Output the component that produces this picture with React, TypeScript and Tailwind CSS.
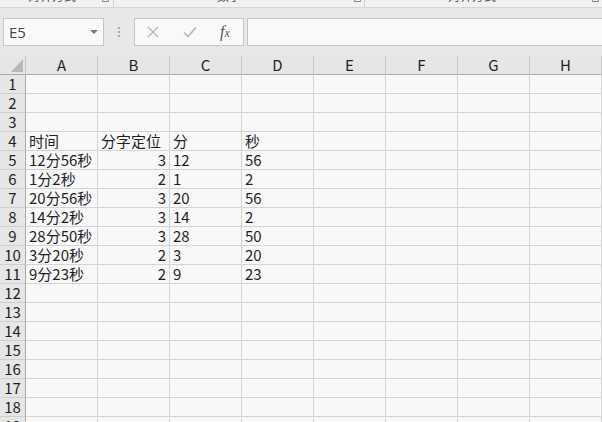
import React from "react";

const columns = ["A", "B", "C", "D", "E", "F", "G", "H"];

type Cell = { text: string; align?: "right" };

const data: Record<number, Cell[]> = {
  4: [{ text: "时间" }, { text: "分字定位" }, { text: "分" }, { text: "秒" }],
  5: [{ text: "12分56秒" }, { text: "3", align: "right" }, { text: "12" }, { text: "56" }],
  6: [{ text: "1分2秒" }, { text: "2", align: "right" }, { text: "1" }, { text: "2" }],
  7: [{ text: "20分56秒" }, { text: "3", align: "right" }, { text: "20" }, { text: "56" }],
  8: [{ text: "14分2秒" }, { text: "3", align: "right" }, { text: "14" }, { text: "2" }],
  9: [{ text: "28分50秒" }, { text: "3", align: "right" }, { text: "28" }, { text: "50" }],
  10: [{ text: "3分20秒" }, { text: "2", align: "right" }, { text: "3" }, { text: "20" }],
  11: [{ text: "9分23秒" }, { text: "2", align: "right" }, { text: "9" }, { text: "23" }],
};

const rows = Array.from({ length: 19 }, (_, i) => i + 1);

function Launcher() {
  return (
    <svg width="7" height="7" viewBox="0 0 7 7" className="text-[#8a8a8a]">
      <path d="M0.5 0.5h3M0.5 0.5v6h6v-3" stroke="currentColor" fill="none" />
      <path d="M3 4l3-3M4 1h2v2" stroke="currentColor" fill="none" />
    </svg>
  );
}

export default function App() {
  return (
    <div className="h-[422px] w-[602px] overflow-hidden bg-[#e8e8e8] font-['Noto_Sans_CJK_SC','Noto_Sans',sans-serif] text-[#1f1f1f]">
      {/* ribbon bottom edge, group labels mostly scrolled off */}
      <div className="relative h-[8px] overflow-hidden border-b border-[#d6d6d6] bg-[#f1f1f1] text-[12px] leading-[16px] text-[#555]">
        <span className="absolute left-[28px] top-[-12px]">对齐方式</span>
        <span className="absolute left-[102px] top-[-5px]"><Launcher /></span>
        <span className="absolute left-[113px] top-0 h-[8px] w-px bg-[#d2d2d2]" />
        <span className="absolute left-[217px] top-[-12px]">数字</span>
        <span className="absolute left-[354px] top-[-5px]"><Launcher /></span>
        <span className="absolute left-[364px] top-0 h-[8px] w-px bg-[#d2d2d2]" />
        <span className="absolute left-[448px] top-[-12px]">对齐方式</span>
        <span className="absolute left-[592px] top-[-5px]"><Launcher /></span>
      </div>

      <div className="h-[10px]" />

      {/* formula bar */}
      <div className="flex h-[28px] items-stretch">
        <div className="ml-[3px] flex w-[101px] items-center justify-between border border-[#c6c6c6] bg-[#f9f9f9] pl-[5px] pr-[5px]">
          <span className="font-['Open_Sans','Noto_Sans',sans-serif] text-[15px] text-[#444]">E5</span>
          <svg width="8" height="4" viewBox="0 0 8 4">
            <path d="M0 0h8L4 4z" fill="#7a7a7a" />
          </svg>
        </div>
        <div className="flex w-[30px] flex-col items-center justify-center gap-[2px]">
          <span className="h-[2px] w-[2px] bg-[#a8a8a8]" />
          <span className="h-[2px] w-[2px] bg-[#a8a8a8]" />
          <span className="h-[2px] w-[2px] bg-[#a8a8a8]" />
        </div>
        <div className="flex w-[110px] items-center border border-[#c6c6c6] bg-[#f9f9f9]">
          <svg width="12" height="12" viewBox="0 0 12 12" className="ml-[12px]">
            <path d="M1 1l10 10M11 1L1 11" stroke="#b4b4b4" strokeWidth="1.2" />
          </svg>
          <svg width="14" height="12" viewBox="0 0 14 12" className="ml-[24px]">
            <path d="M1 6.5l4 4L13 1.5" stroke="#b4b4b4" strokeWidth="1.6" fill="none" />
          </svg>
          <span className="ml-[23px] font-['Liberation_Serif',serif] text-[16px] italic leading-none text-[#555]">
            f<span className="text-[12px]">x</span>
          </span>
        </div>
        <div className="ml-[3px] flex-1 border border-r-0 border-[#c6c6c6] bg-[#f9f9f9]" />
      </div>

      <div className="h-[10px]" />

      {/* sheet */}
      <div className="grid grid-cols-[26px_repeat(8,72px)] auto-rows-[19px] bg-[#f8f8f8]">
        <div className="relative border-b border-r border-b-[#ababab] border-r-[#c4c4c4] bg-[#e6e6e6]">
          <svg width="12" height="13" viewBox="0 0 12 13" className="absolute left-[11px] top-[3px]">
            <path d="M12 0v13H0z" fill="#b8b8b8" />
          </svg>
        </div>
        {columns.map((c) => (
          <div
            key={c}
            className="flex items-end justify-center border-b border-r border-b-[#ababab] border-r-[#c8c8c8] bg-[#e6e6e6] text-[15px] leading-[18px]"
          >
            {c}
          </div>
        ))}
        {rows.map((r) => (
          <React.Fragment key={r}>
            <div className="flex items-end justify-center border-b border-r border-b-[#cfcfcf] border-r-[#ababab] bg-[#e6e6e6] text-[15px] leading-[18px]">
              {r}
            </div>
            {columns.map((c, ci) => {
              const cell = data[r]?.[ci];
              return (
                <div
                  key={c}
                  className={`flex items-end whitespace-nowrap border-b border-r border-[#d4d4d4] px-[3px] text-[15px] leading-[18px] ${
                    cell?.align === "right" ? "justify-end" : "justify-start"
                  }`}
                >
                  {cell?.text}
                </div>
              );
            })}
          </React.Fragment>
        ))}
      </div>
    </div>
  );
}
